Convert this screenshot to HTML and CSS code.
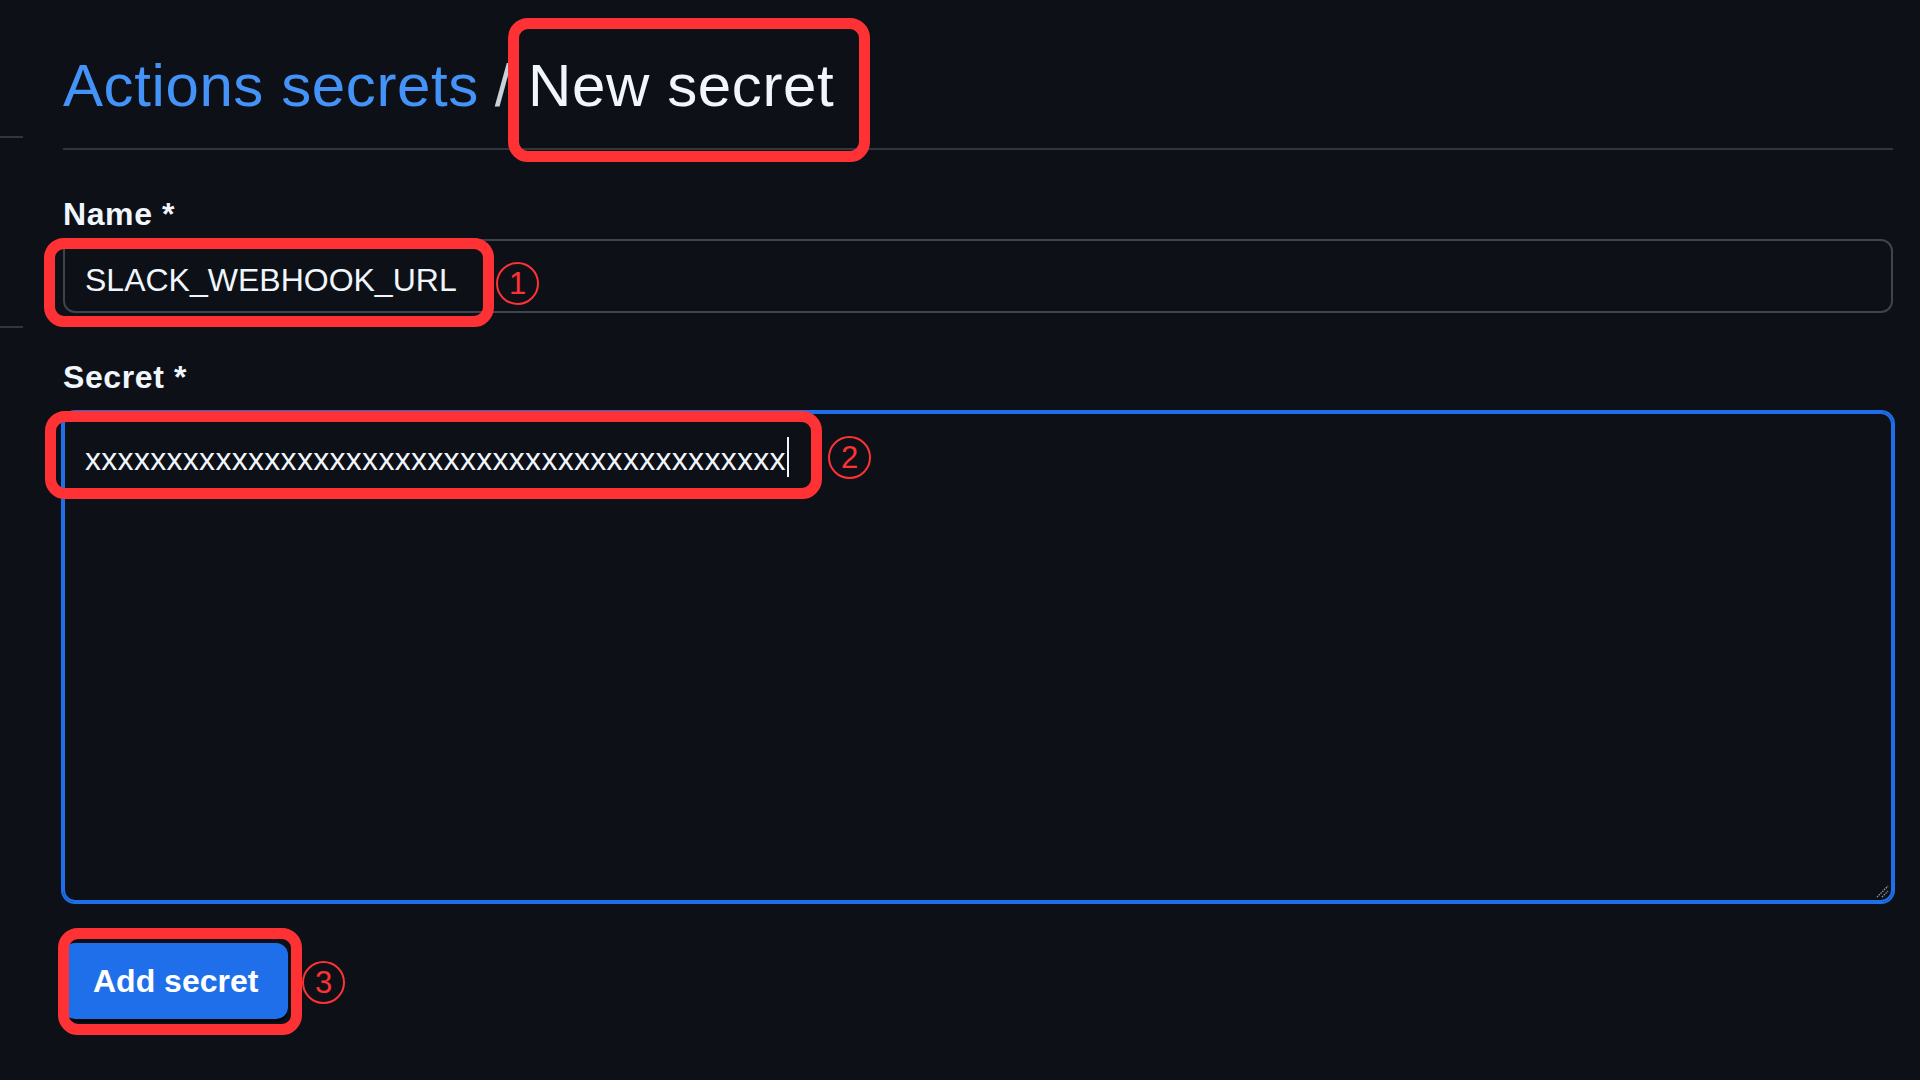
FILE: index.html
```html
<!DOCTYPE html>
<html lang="en">
<head>
<meta charset="utf-8">
<title>New secret</title>
<link rel="stylesheet" href="styles.css">
</head>
<body>
<div class="page">
  <aside class="sidebar">
    <div class="side-a"></div>
    <div class="side-b"></div>
  </aside>
  <main class="main">
    <h1 class="title"><a class="crumb" href="#">Actions secrets</a><span class="sep">/</span><span class="current">New secret</span></h1>
    <form class="form">
      <label class="label label-name">Name *</label>
      <input class="input" type="text" value="SLACK_WEBHOOK_URL">
      <label class="label label-secret">Secret *</label>
      <div class="textarea"><span class="value">xxxxxxxxxxxxxxxxxxxxxxxxxxxxxxxxxxxxxxxxxxx</span><span class="caret"></span>
        <svg class="grip" width="16" height="16" viewBox="0 0 16 16"><path d="M3 14 L14 3 M8 14 L14 8" stroke="#8b949e" stroke-width="1.4" stroke-dasharray="1.5 1" fill="none"/></svg>
      </div>
      <button class="btn" type="button">Add secret</button>
    </form>
  </main>

  <div class="mark mark-title"></div>
  <div class="mark mark-1"></div>
  <div class="mark mark-2"></div>
  <div class="mark mark-3"></div>
  <span class="num num-1">1</span>
  <span class="num num-2">2</span>
  <span class="num num-3">3</span>
</div>
</body>
</html>
```
FILE: styles.css
```css
html, body {
  margin: 0;
  padding: 0;
  background: #0d1117;
}
body {
  font-family: "Liberation Sans", Arial, sans-serif;
  color: #f0f6fc;
}
.page {
  position: relative;
  display: flex;
  width: 1920px;
  height: 1080px;
  overflow: hidden;
}
.sidebar {
  width: 23px;
  flex: none;
}
.side-a {
  height: 136px;
  border-bottom: 2px solid #30363d;
}
.side-b {
  height: 188px;
  border-bottom: 2px solid #30363d;
}
.main {
  flex: none;
  width: 1830px;
  margin-left: 40px;
}
.title {
  margin: 50px 0 0;
  padding-bottom: 26px;
  border-bottom: 2px solid #30363d;
  font-size: 60px;
  line-height: 72px;
  font-weight: 400;
  letter-spacing: 0.6px;
  white-space: nowrap;
}
.crumb {
  color: #4493f8;
  text-decoration: none;
}
.sep {
  color: #c9d1d9;
  margin: 0 16px 0 16px;
}
.current {
  color: #f0f6fc;
}
.form {
  display: flex;
  flex-direction: column;
  align-items: flex-start;
}
.label {
  display: block;
  font-size: 32px;
  line-height: 40px;
  font-weight: 700;
  letter-spacing: 0.6px;
  color: #f0f6fc;
}
.label-name {
  margin-top: 44px;
}
.label-secret {
  margin-top: 44px;
}
.input {
  box-sizing: border-box;
  margin: 5px 0 0;
  width: 1830px;
  height: 74px;
  padding: 19px 20px 11px;
  border: 2px solid #3d444d;
  border-radius: 12px;
  background: #0d1117;
  color: #f0f6fc;
  font-family: "Liberation Sans", Arial, sans-serif;
  font-size: 32px;
  line-height: 40px;
  outline: none;
}
.textarea {
  position: relative;
  box-sizing: border-box;
  margin-top: 15px;
  width: 1830px;
  height: 490px;
  padding: 25px 20px;
  border: 2px solid #1f6feb;
  border-radius: 12px;
  box-shadow: 0 0 0 2px #1f6feb;
  font-size: 32px;
  line-height: 40px;
  color: #f0f6fc;
  white-space: nowrap;
}
.value {
  letter-spacing: 0.3px;
}
.caret {
  display: inline-block;
  width: 2px;
  height: 40px;
  vertical-align: top;
  margin-top: -2px;
  margin-left: 1px;
  background: #f0f6fc;
}
.grip {
  position: absolute;
  right: 1px;
  bottom: 1px;
}
.btn {
  box-sizing: border-box;
  margin-top: 41px;
  height: 76px;
  padding: 0 28px;
  border: 2px solid #1f6feb;
  border-radius: 12px;
  background: #1f6feb;
  color: #ffffff;
  font-family: "Liberation Sans", Arial, sans-serif;
  font-size: 32px;
  font-weight: 700;
  line-height: 40px;
  box-shadow: 0 3px 0 #05070a;
  cursor: pointer;
}

/* red annotation overlays */
.mark {
  position: absolute;
  box-sizing: border-box;
  border: 11px solid #fe3234;
  border-radius: 20px;
}
.mark-title { left: 508px; top: 18px; width: 362px; height: 144px; }
.mark-1 { left: 44px; top: 238px; width: 450px; height: 89px; }
.mark-2 { left: 45px; top: 411px; width: 777px; height: 88px; }
.mark-3 { left: 58px; top: 928px; width: 244px; height: 107px; }

.num {
  position: absolute;
  box-sizing: border-box;
  width: 43px;
  height: 43px;
  border: 2px solid #fe3234;
  border-radius: 50%;
  display: flex;
  align-items: center;
  justify-content: center;
  color: #fe3234;
  font-family: "Liberation Sans", Arial, sans-serif;
  font-size: 31px;
  line-height: 1;
}
.num-1 { left: 496px; top: 262px; }
.num-2 { left: 828px; top: 436px; }
.num-3 { left: 302px; top: 961px; }
```
